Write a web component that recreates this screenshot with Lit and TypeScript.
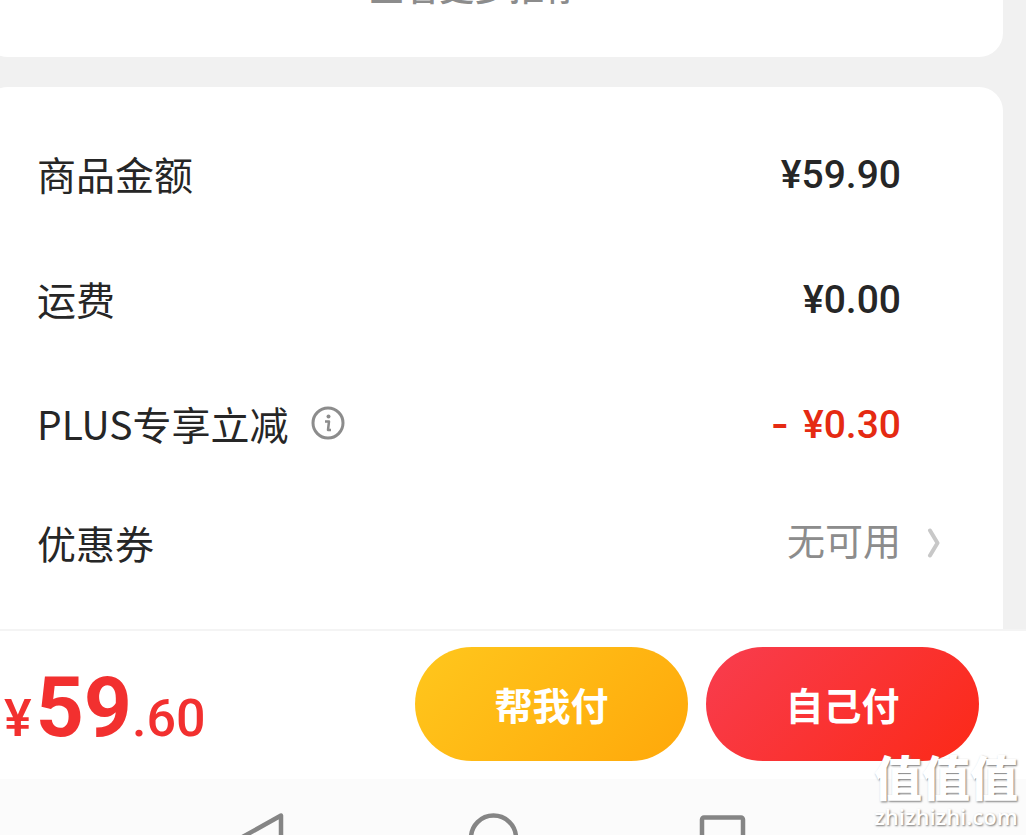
import { LitElement, html, css, nothing } from "lit";
import { customElement, property } from "lit/decorators.js";

interface Fee {
  label: string;
  value: string;
  tone: "plain" | "discount" | "muted";
  minus?: boolean;
  info?: boolean;
  link?: boolean;
}

const fees: Fee[] = [
  { label: "商品金额", value: "¥59.90", tone: "plain" },
  { label: "运费", value: "¥0.00", tone: "plain" },
  { label: "PLUS专享立减", value: "¥0.30", tone: "discount", minus: true, info: true },
  { label: "优惠券", value: "无可用", tone: "muted", link: true },
];

@customElement("fee-row")
class FeeRow extends LitElement {
  @property({ attribute: false }) fee!: Fee;

  static styles = css`
    :host { display: block; }
    .row {
      display: flex;
      align-items: center;
      height: 125px;
      color: #262626;
      font-size: 39px;
      line-height: 56px;
    }
    .row.link { height: 114px; }
    .label { flex: 1; display: flex; align-items: center; gap: 22px; padding-bottom: 4px; }
    .value { font-family: Roboto, "Noto Sans CJK SC", sans-serif; font-weight: 500; }
    .discount { color: #e52a12; }
    .minus { margin-right: 14px; font-family: Inter, sans-serif; font-weight: 600; }
    .muted { color: #8c8c8c; font-size: 38px; font-weight: 400; padding-bottom: 4px; }
    .end { width: 39px; display: flex; justify-content: flex-end; }
    button {
      all: unset;
      display: flex;
      align-items: center;
      cursor: pointer;
    }
    svg { display: block; }
  `;

  render() {
    const f = this.fee;
    const chevron = html`<svg width="14" height="32" viewBox="0 0 14 32" fill="none" stroke="#c8c8c8"
      stroke-width="4" stroke-linecap="round" stroke-linejoin="round" aria-hidden="true">
      <path d="M4 2.500 L11.500 15 L4 27.500" /></svg>`;
    return html`<div class="row ${f.link ? "link" : ""}">
      <div class="label">
        <span>${f.label}</span>
        ${f.info
          ? html`<button aria-label="说明">
              <svg width="34" height="34" viewBox="0 0 34 34" fill="none" stroke="#8c8c8c">
                <circle cx="17" cy="17" r="15" stroke-width="3" />
                <circle cx="17.500" cy="10.500" r="2" fill="#8c8c8c" stroke="none" />
                <path d="M14 15.500 H18 L17 24 H20" stroke-width="2.500" stroke-linejoin="round" />
              </svg></button>`
          : nothing}
      </div>
      ${f.link
        ? html`<button><span class="value ${f.tone}">${f.value}</span><span class="end">${chevron}</span></button>`
        : html`<span class="value ${f.tone}">${f.minus ? html`<span class="minus">-</span>` : nothing}${f.value}</span><span class="end"></span>`}
    </div>`;
  }
}

@customElement("app-root")
class AppRoot extends LitElement {
  static styles = css`
    :host {
      display: flex;
      flex-direction: column;
      position: relative;
      height: 100vh;
      overflow: hidden;
      background: #f1f1f1;
      font-family: "Noto Sans CJK SC", sans-serif;
    }
    .card {
      margin: 0 23px 0 -16px;
      padding: 0 63px 0 53px;
      background: #fff;
    }
    .more {
      display: flex;
      align-items: flex-end;
      justify-content: center;
      height: 57px;
      box-sizing: border-box;
      padding: 0 63px 46px 24px;
      border-radius: 0 0 24px 24px;
      overflow: hidden;
    }
    .more a {
      color: #8c8c8c;
      font-size: 35px;
      font-weight: 500;
      line-height: 50px;
      text-decoration: none;
    }
    .fees {
      flex: 1;
      margin-top: 30px;
      padding-top: 25px;
      border-radius: 24px 24px 0 0;
    }
    .pay {
      display: flex;
      align-items: flex-start;
      justify-content: space-between;
      box-sizing: border-box;
      height: 150px;
      padding: 16px 47px 0 4px;
      border-top: 2px solid #f4f4f4;
      background: #fff;
    }
    .total {
      display: flex;
      align-items: baseline;
      padding-top: 11px;
      color: #f2302f;
      font-family: Roboto, sans-serif;
      font-weight: 500;
      font-size: 52px;
      line-height: 100px;
    }
    .total .int { margin-left: 4px; font-size: 84px; font-weight: 700; }
    .actions { display: flex; gap: 18px; }
    .actions button {
      width: 273px;
      height: 114px;
      padding: 0;
      border: 0;
      border-radius: 57px;
      color: #fff;
      font: 700 38px/56px "Noto Sans CJK SC", sans-serif;
      cursor: pointer;
    }
    .friend { background: linear-gradient(135deg, #ffc71d, #ffa80a); }
    .self { background: linear-gradient(135deg, #f83d4f, #fc2917); }
    .nav {
      display: flex;
      justify-content: center;
      height: 56px;
      overflow: hidden;
      background: #fbfbfb;
    }
    .nav svg { flex: none; margin-right: 51px; }
    .mark {
      position: absolute;
      right: 8px;
      bottom: 5px;
      display: flex;
      flex-direction: column;
      align-items: center;
      color: #fff;
      text-shadow: 1px 1px 2px #777;
    }
    .mark .name { font-size: 48px; line-height: 54px; font-weight: 900; }
    .mark .site { font-family: "Open Sans", sans-serif; font-size: 22px; line-height: 28px; font-weight: 600; }
  `;

  render() {
    return html`
      <section class="card more"><a href="#">查看更多推荐</a></section>
      <section class="card fees">${fees.map((f) => html`<fee-row .fee=${f}></fee-row>`)}</section>
      <footer class="pay">
        <div class="total"><span>¥</span><span class="int">59</span><span>.60</span></div>
        <div class="actions">
          <button class="friend">帮我付</button>
          <button class="self">自己付</button>
        </div>
      </footer>
      <nav class="nav">
        <svg width="520" height="90" viewBox="0 0 520 90" fill="none" stroke="#858585" stroke-width="4.500" stroke-linejoin="round">
          <path d="M53 36.500 V84 L10 60.500 Z" />
          <circle cx="265.500" cy="59" r="22.500" />
          <rect x="474" y="38.500" width="41" height="41" rx="2" />
        </svg>
      </nav>
      <div class="mark" aria-hidden="true"><span class="name">值值值</span><span class="site">zhizhizhi.com</span></div>
    `;
  }
}
